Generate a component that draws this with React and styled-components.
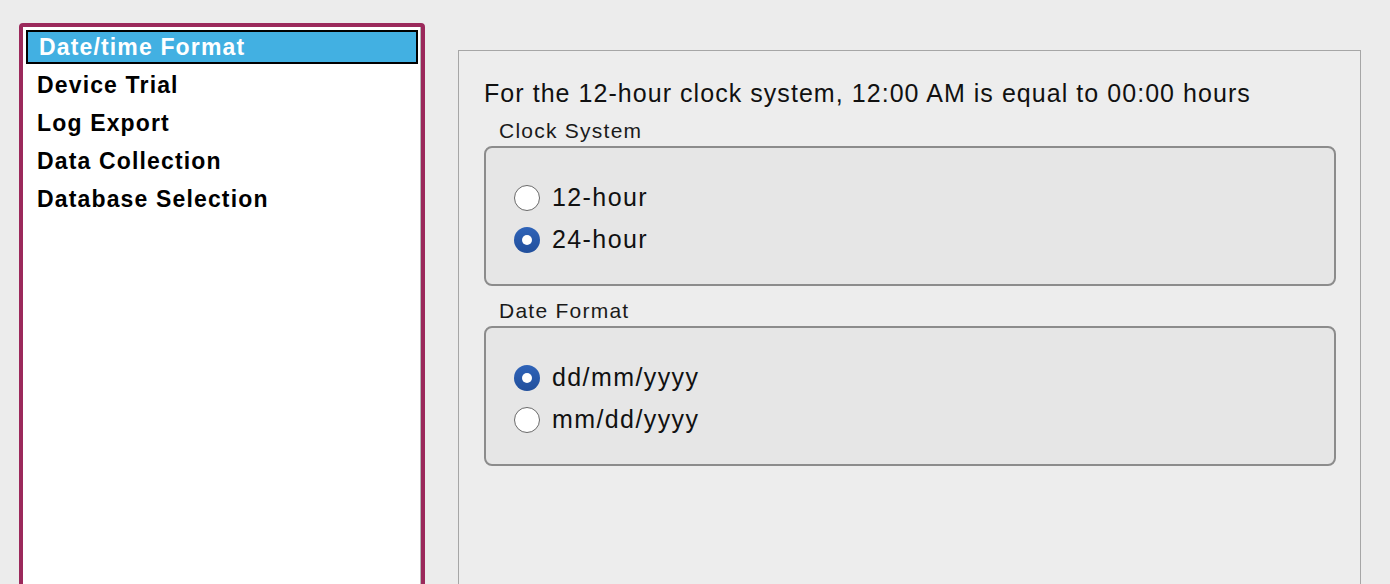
import React, { useState } from "react";
import styled, { createGlobalStyle } from "styled-components";

const GlobalStyle = createGlobalStyle`
  html, body {
    margin: 0;
    padding: 0;
    background: #ececec;
    font-family: "Liberation Sans", Arial, sans-serif;
    overflow: hidden;
  }
`;

const menuItems = [
  "Date/time Format",
  "Device Trial",
  "Log Export",
  "Data Collection",
  "Database Selection",
];

const groups = [
  { key: "clock", title: "Clock System", options: ["12-hour", "24-hour"] },
  { key: "date", title: "Date Format", options: ["dd/mm/yyyy", "mm/dd/yyyy"] },
];

function App() {
  const [active, setActive] = useState(0);
  const [values, setValues] = useState({ clock: "24-hour", date: "dd/mm/yyyy" });

  return (
    <>
      <GlobalStyle />
      <Page>
        <Sidebar>
          <List>
            {menuItems.map((item, i) => (
              <Item key={item} selected={i === active} onClick={() => setActive(i)}>
                {item}
              </Item>
            ))}
          </List>
        </Sidebar>

        <Panel>
          <Heading>For the 12-hour clock system, 12:00 AM is equal to 00:00 hours</Heading>
          {groups.map((group) => (
            <Group key={group.key}>
              <GroupTitle>{group.title}</GroupTitle>
              <GroupBox>
                {group.options.map((opt) => (
                  <RadioRow key={opt} onClick={() => setValues({ ...values, [group.key]: opt })}>
                    <Radio checked={values[group.key] === opt} />
                    <RadioLabel>{opt}</RadioLabel>
                  </RadioRow>
                ))}
              </GroupBox>
            </Group>
          ))}
        </Panel>
      </Page>
    </>
  );
}

export default App;

const Page = styled.div`
  display: flex;
  align-items: flex-start;
  padding: 23px 0 0 19px;
  height: 584px;
  box-sizing: border-box;
  overflow: hidden;
`;

const Sidebar = styled.div`
  width: 406px;
  height: 620px;
  box-sizing: border-box;
  border: 4px solid #9b295b;
  border-radius: 4px;
  background: #ffffff;
  flex-shrink: 0;
`;

const List = styled.div`
  height: 100%;
  box-sizing: border-box;
  border-right: 1px solid #b8b8b8;
  padding-top: 1px;
`;

const Item = styled.div`
  display: flex;
  align-items: center;
  box-sizing: border-box;
  font-size: 23px;
  font-weight: 700;
  letter-spacing: 1.15px;
  cursor: pointer;
  height: ${(p) => (p.selected ? "34px" : "38px")};
  margin: ${(p) => (p.selected ? "2px 2px 2px 3px" : "0")};
  padding-left: ${(p) => (p.selected ? "11px" : "14px")};
  border: ${(p) => (p.selected ? "2px solid #000" : "none")};
  background: ${(p) => (p.selected ? "#42b0e2" : "transparent")};
  color: ${(p) => (p.selected ? "#ffffff" : "#000000")};
`;

const Panel = styled.div`
  margin: 27px 0 0 33px;
  width: 903px;
  height: 600px;
  box-sizing: border-box;
  border: 1px solid #a6a6a6;
  background: #ededed;
  padding: 28px 24px 0 25px;
`;

const Heading = styled.div`
  font-size: 25px;
  line-height: 28px;
  letter-spacing: 1.05px;
  color: #111;
`;

const Group = styled.div`
  margin-top: 12px;
  & + & {
    margin-top: 13px;
  }
`;

const GroupTitle = styled.div`
  font-size: 21px;
  line-height: 24px;
  letter-spacing: 1.25px;
  color: #1a1a1a;
  padding-left: 15px;
  margin-bottom: 3px;
`;

const GroupBox = styled.div`
  height: 140px;
  box-sizing: border-box;
  border: 2px solid #8c8c8c;
  border-radius: 8px;
  background: #e6e6e6;
  display: flex;
  flex-direction: column;
  justify-content: center;
  padding: 5px 0 0 28px;
`;

const RadioRow = styled.div`
  display: flex;
  align-items: center;
  gap: 12px;
  height: 42px;
  cursor: pointer;
`;

const Radio = styled.span`
  width: 26px;
  height: 26px;
  box-sizing: border-box;
  border-radius: 50%;
  flex-shrink: 0;
  position: relative;
  border: ${(p) => (p.checked ? "none" : "1.5px solid #6a6a6a")};
  background: ${(p) =>
    p.checked ? "linear-gradient(#2e63b8, #214f9c)" : "#ffffff"};

  &::after {
    content: "";
    display: ${(p) => (p.checked ? "block" : "none")};
    position: absolute;
    left: 50%;
    top: 50%;
    width: 10px;
    height: 10px;
    margin: -5px 0 0 -5px;
    border-radius: 50%;
    background: #ffffff;
  }
`;

const RadioLabel = styled.span`
  font-size: 25px;
  letter-spacing: 1.4px;
  color: #111;
`;
